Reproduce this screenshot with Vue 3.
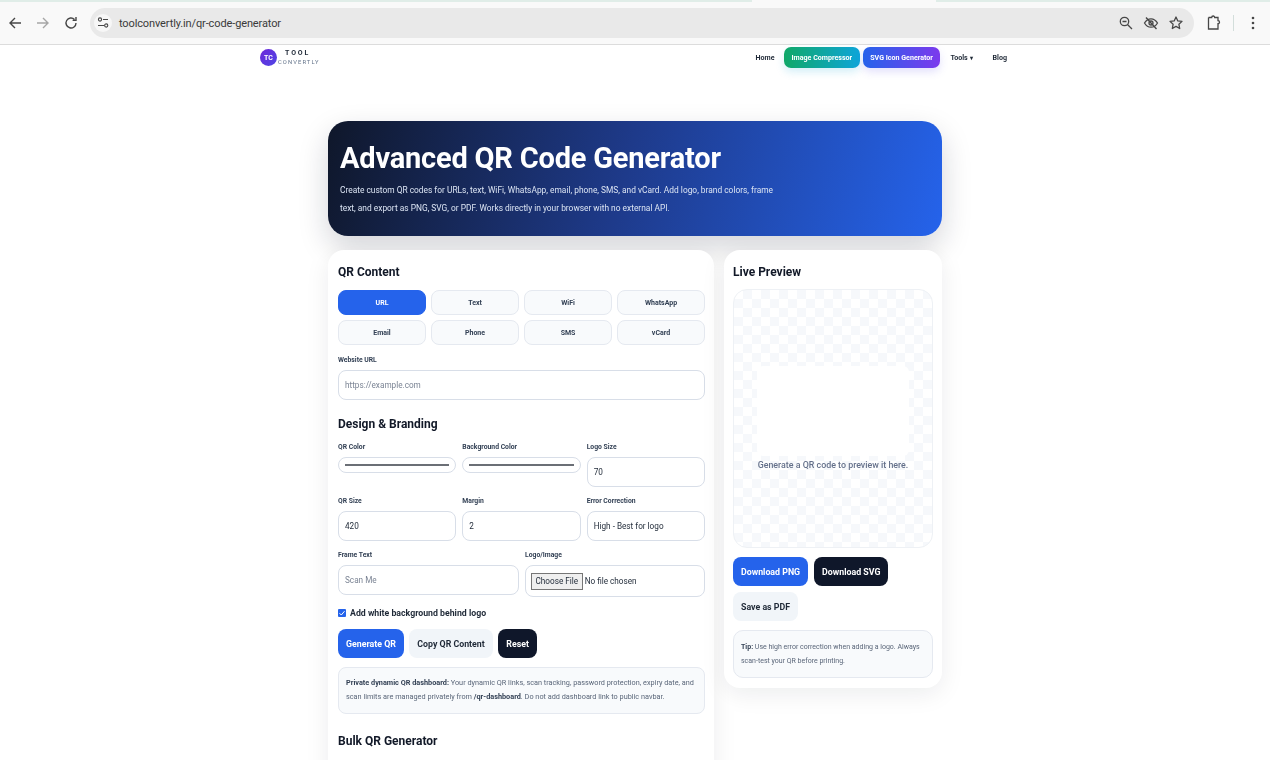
<template>
  <div class="browser">
    <div class="tabstrip">
      <div class="tab-left"></div>
      <div class="tab-active"></div>
      <div class="tab-right"></div>
    </div>
    <div class="toolbar">
      <svg class="tool-icon" viewBox="0 0 16 16"><path d="M14 8H3M8 3 3 8l5 5" fill="none" stroke="#474747" stroke-width="1.4"/></svg>
      <svg class="tool-icon" viewBox="0 0 16 16"><path d="M2 8h11M8 3l5 5-5 5" fill="none" stroke="#a6a6a6" stroke-width="1.4"/></svg>
      <svg class="tool-icon" viewBox="0 0 16 16"><path d="M13 8a5 5 0 1 1-1.500-3.600M13 2v3.400H9.600" fill="none" stroke="#474747" stroke-width="1.4"/></svg>
      <div class="omnibox">
        <span class="site-badge">
          <svg viewBox="0 0 14 14" width="14" height="14"><circle cx="4" cy="3.500" r="1.600" fill="none" stroke="#474747" stroke-width="1.1"/><path d="M7 3.500h5M2 9.500h6" stroke="#474747" stroke-width="1.1"/><circle cx="10.200" cy="9.500" r="1.600" fill="none" stroke="#474747" stroke-width="1.1"/></svg>
        </span>
        <span class="url">toolconvertly.in/qr-code-generator</span>
        <span class="omni-icons">
          <svg viewBox="0 0 16 16" width="16" height="16"><circle cx="6.500" cy="6.500" r="4.200" fill="none" stroke="#474747" stroke-width="1.3"/><path d="M9.700 9.700 14 14M4.500 6.500h4" stroke="#474747" stroke-width="1.3"/></svg>
          <svg viewBox="0 0 16 16" width="16" height="16"><path d="M1.500 8S4 3.800 8 3.800 14.500 8 14.500 8 12 12.200 8 12.200 1.500 8 1.500 8Z" fill="none" stroke="#474747" stroke-width="1.3"/><circle cx="8" cy="8" r="2" fill="none" stroke="#474747" stroke-width="1.3"/><path d="M3 2.500 13.500 14" stroke="#474747" stroke-width="1.4"/></svg>
          <svg viewBox="0 0 16 16" width="16" height="16"><path d="m8 2 1.800 3.900 4.200.5-3.100 2.900.8 4.200L8 11.400 4.300 13.500l.8-4.200L2 6.400l4.200-.5Z" fill="none" stroke="#474747" stroke-width="1.3" stroke-linejoin="round"/></svg>
        </span>
      </div>
      <svg class="puzzle" viewBox="0 0 16 16" width="16" height="16"><path d="M2.500 2.500h3.200a1.500 1.500 0 0 1 3 0H12v3.200a1.500 1.500 0 0 1 0 3V14H2.500v-3" fill="none" stroke="#474747" stroke-width="1.300"/><path d="M2.500 2.500v8.500" stroke="#474747" stroke-width="1.300"/></svg>
      <span class="tool-divider"></span>
      <svg class="kebab" viewBox="0 0 4 16" width="4" height="16"><circle cx="2" cy="3" r="1.300" fill="#474747"/><circle cx="2" cy="8" r="1.300" fill="#474747"/><circle cx="2" cy="13" r="1.300" fill="#474747"/></svg>
    </div>
  </div>

  <div class="page">
    <nav class="navbar">
      <div class="logo">
        <span class="logo-mark">TC</span>
        <span class="logo-text">
          <b>TOOL</b>
          <small>CONVERTLY</small>
        </span>
      </div>
      <div class="nav-links">
        <a>Home</a>
        <a class="pill green">Image Compressor</a>
        <a class="pill violet">SVG Icon Generator</a>
        <a class="tools">Tools <i>▾</i></a>
        <a>Blog</a>
      </div>
    </nav>

    <main class="content">
      <section class="hero">
        <h1>Advanced QR Code Generator</h1>
        <p>Create custom QR codes for URLs, text, WiFi, WhatsApp, email, phone, SMS, and vCard. Add logo, brand colors, frame text, and export as PNG, SVG, or PDF. Works directly in your browser with no external API.</p>
      </section>

      <div class="columns">
        <section class="card left">
          <h2>QR Content</h2>
          <div class="tabs">
            <button v-for="t in tabs" :key="t" class="tab" :class="{ active: t === 'URL' }">{{ t }}</button>
          </div>

          <label class="field-label url-label">Website URL</label>
          <input class="input" type="text" placeholder="https://example.com" />

          <h2 class="design-title">Design &amp; Branding</h2>
          <div class="grid3">
            <div>
              <label class="field-label">QR Color</label>
              <div class="color-input"><span></span></div>
            </div>
            <div>
              <label class="field-label">Background Color</label>
              <div class="color-input"><span></span></div>
            </div>
            <div>
              <label class="field-label">Logo Size</label>
              <input class="input" type="text" value="70" />
            </div>
            <div>
              <label class="field-label">QR Size</label>
              <input class="input" type="text" value="420" />
            </div>
            <div>
              <label class="field-label">Margin</label>
              <input class="input" type="text" value="2" />
            </div>
            <div>
              <label class="field-label">Error Correction</label>
              <div class="input select-like">High - Best for logo</div>
            </div>
          </div>

          <div class="grid2">
            <div>
              <label class="field-label">Frame Text</label>
              <input class="input" type="text" placeholder="Scan Me" />
            </div>
            <div>
              <label class="field-label">Logo/Image</label>
              <div class="input file-input">
                <span class="file-button">Choose File</span>
                <span>No file chosen</span>
              </div>
            </div>
          </div>

          <div class="check-row">
            <span class="check">
              <svg viewBox="0 0 8 8" width="8" height="8"><path d="m1.500 4.200 1.800 1.800 3.200-3.800" fill="none" stroke="#fff" stroke-width="1"/></svg>
            </span>
            Add white background behind logo
          </div>

          <div class="actions">
            <button class="btn blue">Generate QR</button>
            <button class="btn light">Copy QR Content</button>
            <button class="btn dark">Reset</button>
          </div>

          <div class="note">
            <b>Private dynamic QR dashboard:</b> Your dynamic QR links, scan tracking, password protection, expiry date, and scan limits are managed privately from <b>/qr-dashboard</b>. Do not add dashboard link to public navbar.
          </div>

          <h2 class="bulk-title">Bulk QR Generator</h2>
          <label class="field-label">Bulk Text / URLs (one per line)</label>
          <div class="input bulk-area"></div>
        </section>

        <section class="card right">
          <h2>Live Preview</h2>
          <div class="preview">
            <div class="preview-inner"></div>
            <p>Generate a QR code to preview it here.</p>
          </div>
          <div class="downloads">
            <button class="btn blue">Download PNG</button>
            <button class="btn dark">Download SVG</button>
            <button class="btn light">Save as PDF</button>
          </div>
          <div class="tip"><b>Tip:</b> Use high error correction when adding a logo. Always scan-test your QR before printing.</div>
        </section>
      </div>
    </main>
  </div>
</template>

<script setup>
const tabs = ['URL', 'Text', 'WiFi', 'WhatsApp', 'Email', 'Phone', 'SMS', 'vCard']
</script>

<style>
html, body {
  margin: 0;
  height: 760px;
  overflow: hidden;
  background: #fff;
}
</style>

<style scoped>
.browser {
  height: 45px;
  box-sizing: border-box;
  border-bottom: 1px solid #dcdcdc;
  background: #f9f9f9;
  font-family: Roboto, "Liberation Sans", sans-serif;
}

.tabstrip {
  display: flex;
  height: 2px;
  background: #e0ede8;
}

.tab-left {
  width: 752px;
}

.tab-active {
  width: 184px;
  background: #f9f9f9;
}

.tab-right {
  flex: 1;
}

.toolbar {
  display: flex;
  align-items: center;
  height: 30px;
  margin-top: 6px;
  padding-left: 7px;
}

.tool-icon {
  width: 16px;
  height: 16px;
  margin-right: 12px;
}

.toolbar .tool-icon:nth-child(3) {
  margin-right: 11px;
}

.omnibox {
  display: flex;
  align-items: center;
  width: 1104px;
  height: 30px;
  border-radius: 15px;
  background: #e9e9e9;
}

.site-badge {
  display: flex;
  align-items: center;
  justify-content: center;
  width: 18px;
  height: 18px;
  margin: 0 7px 0 4px;
  border-radius: 50%;
  background: #f7f7f7;
}

.url {
  font-size: 11px;
  letter-spacing: -0.12px;
  color: #3a3a3a;
}

.omni-icons {
  display: flex;
  gap: 9px;
  margin-left: auto;
  margin-right: 10px;
}

.puzzle {
  margin-left: 12px;
}

.tool-divider {
  width: 1px;
  height: 16px;
  margin-left: 11px;
  background: #d3dedb;
}

.kebab {
  margin-left: 17px;
}

.page {
  font-family: Roboto, "Liberation Sans", sans-serif;
  color: #111827;
  will-change: transform;
}

.navbar {
  display: flex;
  justify-content: space-between;
  align-items: center;
  width: 750px;
  height: 25px;
  margin-left: 260px;
}

.logo {
  display: flex;
  align-items: center;
  gap: 1px;
}

.logo-mark {
  display: flex;
  align-items: center;
  justify-content: center;
  width: 17px;
  height: 17px;
  border-radius: 50%;
  background: linear-gradient(135deg, #6d28d9, #4f46e5);
  color: #fff;
  font-size: 7px;
  font-weight: 700;
}

.logo-text {
  display: flex;
  flex-direction: column;
  line-height: 9px;
}

.logo-text b {
  margin-left: 7px;
  font-size: 7px;
  letter-spacing: 1.9px;
  color: #1f2937;
}

.logo-text small {
  font-size: 5.800px;
  letter-spacing: 1.100px;
  color: #64748b;
}

.nav-links {
  display: flex;
  align-items: center;
  font-size: 7.100px;
  font-weight: 700;
  color: #1f2937;
}

.nav-links a {
  margin-left: 10px;
}

.nav-links .pill {
  display: block;
  height: 21px;
  box-sizing: border-box;
  margin-left: 3px;
  padding: 0 7.500px;
  border-radius: 7px;
  color: #fff;
  line-height: 21px;
}

.nav-links .pill.green {
  margin-left: 9.500px;
  background: linear-gradient(90deg, #10a868, #0ea5d9);
  box-shadow: 0 4px 9px rgba(14, 165, 217, 0.18);
}

.nav-links .pill.violet {
  background: linear-gradient(90deg, #2563eb, #7c3aed);
  box-shadow: 0 4px 9px rgba(99, 90, 237, 0.18);
}

.nav-links .tools i {
  font-style: normal;
  font-size: 6px;
}

.nav-links a:last-child {
  margin-left: 20px;
  margin-right: 3px;
}

.content {
  width: 614px;
  margin: 51px 0 0 328px;
}

.hero {
  box-sizing: border-box;
  height: 115px;
  padding: 19px 12px 0;
  border-radius: 20px;
  background: linear-gradient(105deg, #0f172a 0%, #1e3a8a 48%, #2563eb 100%);
  box-shadow: 0 12px 30px rgba(15, 23, 42, 0.18);
  color: #fff;
}

.hero h1 {
  margin: 0;
  font-size: 29px;
  line-height: 36px;
  font-weight: 700;
  letter-spacing: -0.2px;
}

.hero p {
  max-width: 440px;
  margin: 5px 0 0;
  font-size: 8.400px;
  line-height: 18px;
  color: #dbe4f3;
}

.columns {
  display: flex;
  align-items: flex-start;
  gap: 10px;
  margin-top: 14px;
}

.card {
  box-sizing: border-box;
  padding: 11px 9px 10px 10px;
  border-radius: 16px;
  background: #fff;
  box-shadow: 0 6px 24px rgba(15, 23, 42, 0.08);
}

.left {
  width: 386px;
}

.right {
  width: 218px;
  height: 438px;
  padding-left: 9px;
}

h2 {
  margin: 0;
  font-size: 12px;
  line-height: 22px;
  font-weight: 700;
  color: #111827;
}

.tabs {
  display: grid;
  grid-template-columns: repeat(4, 1fr);
  gap: 5px;
  margin-top: 7px;
}

.tab {
  height: 25px;
  padding: 0;
  border: 1px solid #e5e9f0;
  border-radius: 8px;
  background: #f8fafc;
  color: #334155;
  font-family: inherit;
  font-size: 7px;
  font-weight: 700;
}

.tab.active {
  border-color: #2563eb;
  background: #2563eb;
  color: #fff;
}

.field-label {
  display: block;
  margin-bottom: 5px;
  font-size: 6.800px;
  line-height: 9px;
  font-weight: 700;
  color: #334155;
}

.url-label {
  margin-top: 11px;
}

.input {
  display: block;
  box-sizing: border-box;
  width: 100%;
  height: 30px;
  padding: 0 6px;
  border: 1px solid #d8dee8;
  border-radius: 8px;
  background: #fff;
  color: #1f2937;
  font-family: inherit;
  font-size: 8.200px;
  outline: none;
}

.input::placeholder {
  color: #7b8494;
}

.design-title {
  margin-top: 13px;
}

.grid3 {
  display: grid;
  grid-template-columns: repeat(3, 1fr);
  gap: 10px 6px;
  margin-top: 8px;
}

.grid2 {
  display: grid;
  grid-template-columns: 181px 180px;
  gap: 6px;
  margin-top: 10px;
}

.color-input {
  display: flex;
  align-items: center;
  box-sizing: border-box;
  height: 16px;
  margin-top: 1px;
  padding: 0 6px;
  border: 1px solid #d8dee8;
  border-radius: 8px;
}

.color-input span {
  flex: 1;
  height: 2px;
  background: #6b6f76;
}

.select-like {
  line-height: 28px;
}

.file-input {
  display: flex;
  align-items: center;
  gap: 2px;
  height: 32px;
  padding-left: 5px;
}

.file-button {
  box-sizing: border-box;
  height: 17px;
  padding: 0 3.500px;
  border: 1px solid #767676;
  background: #efefef;
  line-height: 15px;
}

.check-row {
  display: flex;
  align-items: center;
  gap: 4px;
  margin-top: 11px;
  font-size: 8.750px;
  font-weight: 700;
  color: #1f2937;
}

.check {
  display: flex;
  align-items: center;
  justify-content: center;
  width: 8px;
  height: 8px;
  border-radius: 1px;
  background: #2563eb;
}

.actions {
  display: flex;
  gap: 5.500px;
  margin-top: 11px;
}

.btn {
  height: 29px;
  padding: 0 8px;
  border: none;
  border-radius: 8px;
  font-family: inherit;
  font-size: 8.800px;
  font-weight: 700;
}

.btn.blue {
  background: #2563eb;
  color: #fff;
}

.btn.light {
  background: #f1f5f9;
  color: #1f2937;
}

.btn.dark {
  background: #0f172a;
  color: #fff;
}

.note {
  box-sizing: border-box;
  height: 47px;
  margin-top: 9px;
  padding: 8px 7px;
  border: 1px solid #e5e9f0;
  border-radius: 8px;
  background: #f8fafc;
  font-size: 7.300px;
  line-height: 14px;
  color: #5a6679;
}

.note b {
  color: #334155;
}

.bulk-title {
  margin-top: 16px;
}

.bulk-title + .field-label {
  margin-top: 8px;
}

.bulk-area {
  height: 80px;
}

.preview {
  display: flex;
  flex-direction: column;
  align-items: center;
  box-sizing: border-box;
  height: 259px;
  margin-top: 6px;
  padding-top: 76px;
  border: 1px solid #eef1f5;
  border-radius: 14px;
  background: repeating-conic-gradient(#f6f8fb 0 25%, #fff 0 50%) 0 0 / 18px 18px;
}

.preview-inner {
  width: 152px;
  height: 90px;
  border-radius: 6px;
  background: #fff;
}

.preview p {
  margin: 4px 0 0;
  font-size: 8.850px;
  line-height: 10px;
  font-weight: 500;
  color: #64708a;
}

.downloads {
  display: flex;
  flex-wrap: wrap;
  gap: 6px;
  margin-top: 9px;
}

.tip {
  box-sizing: border-box;
  height: 48px;
  margin-top: 9px;
  padding: 9px 7px;
  border: 1px solid #e5e9f0;
  border-radius: 10px;
  background: #f8fafc;
  font-size: 7px;
  line-height: 14px;
  color: #5a6679;
}

.tip b {
  color: #334155;
}
</style>
